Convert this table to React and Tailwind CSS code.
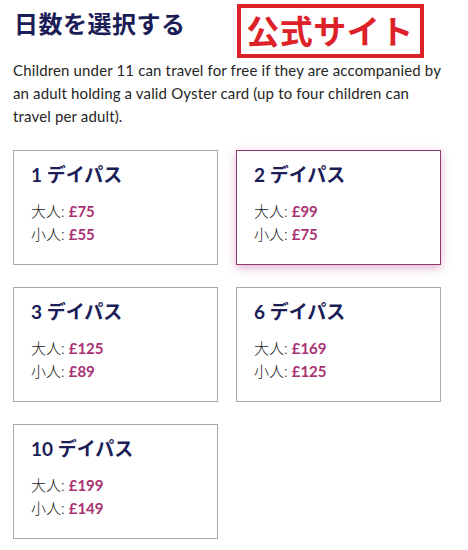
import React from 'react';

const passes = [
    { days: 1, adult: '£75', child: '£55' },
    { days: 2, adult: '£99', child: '£75', active: true },
    { days: 3, adult: '£125', child: '£89' },
    { days: 6, adult: '£169', child: '£125' },
    { days: 10, adult: '£199', child: '£149' },
];

const font = { fontFamily: 'Lato, "Noto Sans CJK JP", sans-serif' };

const PassCard = ({ days, adult, child, active }) => (
    <div
        className={
            active
                ? 'h-[115px] bg-white border border-[#8c3a6c] shadow-[0_3px_9px_rgba(170,40,120,0.35)] pt-[12px] px-[17px]'
                : 'h-[115px] bg-white border border-[#a9a9a9] pt-[12px] px-[17px]'
        }
    >
        <h3 className="text-[19px] leading-[24px] font-bold text-[#1b1d57]">
            {days} デイパス
        </h3>
        <div className="mt-[13px] text-[15px] leading-[23px] text-[#222]">
            <p>
                <span className="font-light">大人: </span>
                <span className="font-bold text-[#a83272]">{adult}</span>
            </p>
            <p>
                <span className="font-light">小人: </span>
                <span className="font-bold text-[#a83272]">{child}</span>
            </p>
        </div>
    </div>
);

const App = () => {
    return (
        <div className="w-[468px] h-[550px] bg-white pl-[13px] overflow-hidden" style={font}>
            <div className="flex items-start h-[59px] pt-1">
                <h2 className="mt-[5px] pl-px text-[24px] leading-[30px] font-bold text-[#1b1d57] tracking-[0.5px]">
                    日数を選択する
                </h2>
                <div className="ml-[51px] w-[187px] h-[54px] border-4 border-[#dd2128] flex items-center justify-center">
                    <span className="text-[33px] leading-none font-bold text-[#dd2128] tracking-[0.5px]">
                        公式サイト
                    </span>
                </div>
            </div>

            <p className="w-[445px] whitespace-nowrap text-[15px] leading-[23px] tracking-[0.15px] text-[#262626]">
                Children under 11 can travel for free if they are accompanied by
                <br />
                an adult holding a valid Oyster card (up to four children can
                <br />
                travel per adult).
            </p>

            <div className="mt-[22px] grid grid-cols-[205px_205px] gap-x-[18px] gap-y-[22px]">
                {passes.map((p) => (
                    <PassCard key={p.days} {...p} />
                ))}
            </div>
        </div>
    );
};

export default App;
